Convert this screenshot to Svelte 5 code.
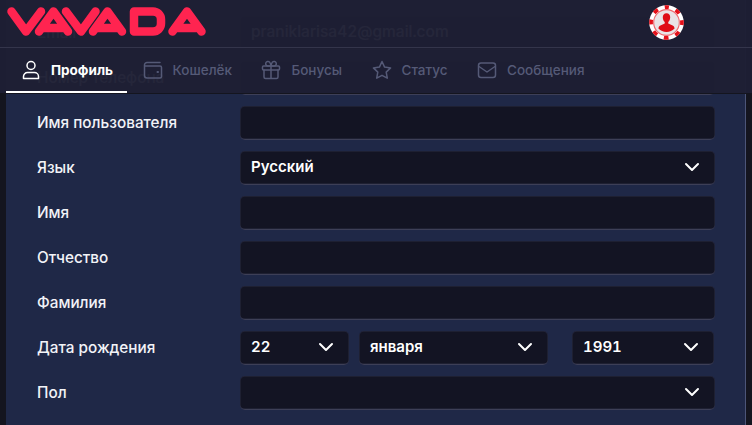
<script>
  const rows = [
    { label: "Имя пользователя" },
    { label: "Язык", value: "Русский", select: true },
    { label: "Имя" },
    { label: "Отчество" },
    { label: "Фамилия" },
    { label: "Дата рождения", date: ["22", "января", "1991"] },
    { label: "Пол", select: true },
  ];

  const tabs = [
    { id: "profile", label: "Профиль" },
    { id: "wallet", label: "Кошелёк" },
    { id: "gift", label: "Бонусы" },
    { id: "star", label: "Статус" },
    { id: "mail", label: "Сообщения" },
  ];
  let active = $state("profile");
</script>

{#snippet chevron()}
  <svg class="chevron" viewBox="0 0 16 10" width="16" height="10" aria-hidden="true">
    <path d="M2 2l6 6 6-6" fill="none" stroke="currentColor" stroke-width="2" stroke-linecap="round" stroke-linejoin="round" />
  </svg>
{/snippet}

{#snippet icon(id)}
  <svg class="tab-icon" viewBox="0 0 20 20" width="20" height="20" fill="none" stroke="currentColor" stroke-width="1.5" stroke-linecap="round" stroke-linejoin="round" aria-hidden="true">
    {#if id === "profile"}
      <circle cx="10" cy="5.5" r="4" />
      <path d="M2.5 18.500v-2a4 4 0 0 1 4-4h7a4 4 0 0 1 4 4v2z" />
    {:else if id === "wallet"}
      <path d="M17 2.500H4a2.500 2.500 0 0 0-2.500 2.500v10.500A2.500 2.500 0 0 0 4 18h13a1.500 1.500 0 0 0 1.500-1.500v-9A1.500 1.500 0 0 0 17 6H1.500" />
      <path d="M14.500 12h.5" stroke-width="2" />
    {:else if id === "gift"}
      <rect x="1.500" y="6" width="17" height="4" rx="1" />
      <path d="M3 10v7a1.500 1.500 0 0 0 1.500 1.500h11A1.500 1.500 0 0 0 17 17v-7M10 6v12.500" />
      <path d="M10 6H7a2.300 2.300 0 1 1 1.500-4C9.500 3 10 6 10 6zM10 6h3a2.300 2.300 0 1 0-1.500-4C10.500 3 10 6 10 6z" />
    {:else if id === "star"}
      <path d="M10 1.500l2.600 5.600 6 .8-4.400 4.200 1.100 6.100L10 15.300l-5.300 2.900 1.100-6.100L1.400 7.900l6-.8z" />
    {:else}
      <rect x="1.500" y="3" width="17" height="14.500" rx="2.500" />
      <path d="M2 6.500l8 5.500 8-5.500" />
    {/if}
  </svg>
{/snippet}

<div class="page">
  <header class="header">
    <div class="top">
      <svg class="logo" viewBox="0 0 210 44" width="210" height="44" aria-label="VAVADA">
        <g fill="none" stroke="#ff2450" stroke-width="8.500" stroke-linecap="round" stroke-linejoin="round">
          <path d="M11.500 11.500L26 31.500 41 11.500" />
          <path d="M39 31.500L53.500 11.500 68 31.500M44 28h19" />
          <path d="M66 11.500L81 31.500 95.500 11.500" />
          <path d="M93 31.500L107.500 11.500 122 31.500M98 28h19" />
          <path d="M134 11.500h19a8 8 0 0 1 8 8v4a8 8 0 0 1-8 8h-19z" />
          <path d="M172.500 31.500L187 11.500 201.500 31.500M177.500 28h19" />
        </g>
      </svg>
      <div class="chip" aria-hidden="true">
        <svg viewBox="0 0 36 36" width="35" height="35">
          <circle cx="18" cy="18" r="17.800" fill="#fff" />
          <circle cx="18" cy="18" r="15.900" fill="none" stroke="#e4111a" stroke-width="3.800" stroke-dasharray="5 7.490" stroke-dashoffset="2.500" transform="rotate(-90 18 18)" />
          <circle cx="18" cy="18" r="13.200" fill="#e9e4e6" stroke="#ee6d72" stroke-width="1.200" />
          <path d="M18 8.500c2.500 0 3.900 1.900 3.800 4.300-.1 2.100-.9 3.800-2 4.800v1.400l4.500 2c1.300.6 2 1.800 2 3.200a11.500 11.500 0 0 1-16.600 0c0-1.400.7-2.600 2-3.200l4.500-2v-1.400c-1.100-1-1.900-2.700-2-4.800-.1-2.400 1.300-4.300 3.800-4.300z" fill="#df0d16" />
        </svg>
      </div>
    </div>
    <nav class="tabs">
      {#each tabs as tab}
        <button class="tab" class:active={active === tab.id} onclick={() => (active = tab.id)}>
          {@render icon(tab.id)}
          <span>{tab.label}</span>
        </button>
      {/each}
    </nav>
  </header>

  <main class="panel">
    <div class="row">
      <span class="label">Email</span>
      <div class="field"><span class="email">praniklarisa42@gmail.com</span></div>
    </div>
    <div class="row">
      <span class="label">Номер телефона</span>
      <div class="field"></div>
    </div>
    {#each rows as row}
      <div class="row">
        <span class="label">{row.label}</span>
        {#if row.date}
          <div class="date">
            {#each row.date as part}
              <div class="field select"><span>{part}</span>{@render chevron()}</div>
            {/each}
          </div>
        {:else if row.select}
          <div class="field select"><span>{row.value ?? ""}</span>{@render chevron()}</div>
        {:else}
          <div class="field"></div>
        {/if}
      </div>
    {/each}
  </main>
</div>

<style>
  :global(body) {
    margin: 0;
    background: #14151f;
  }

  .page {
    position: relative;
    width: 752px;
    height: 425px;
    overflow: hidden;
    background: #14151f;
    font-family: Inter, "Noto Sans", sans-serif;
  }

  .header {
    position: absolute;
    top: 0;
    left: 0;
    width: 100%;
    z-index: 2;
    background: rgba(30, 31, 52, 0.97);
    box-shadow: 0 1px 0 #14151f;
  }

  .top {
    height: 47px;
    border-bottom: 1px solid #34354b;
    display: flex;
    align-items: flex-start;
    justify-content: space-between;
    padding-right: 68px;
  }

  .logo {
    display: block;
  }

  .chip {
    margin-top: 5px;
    height: 35px;
  }

  .tabs {
    display: flex;
    height: 45px;
    padding-left: 6px;
  }

  .tab {
    display: flex;
    align-items: center;
    gap: 10px;
    padding: 0 14px 0 15.500px;
    border: 0;
    border-bottom: 2px solid transparent;
    background: none;
    color: #555a77;
    font: 500 13.500px Inter, "Noto Sans", sans-serif;
    cursor: pointer;
  }

  .tab:first-child {
    padding: 0 14px 0 15px;
  }

  .tab.active {
    color: #fff;
    font-weight: 700;
    border-bottom-color: #fff;
  }

  .panel {
    margin: 0 6px;
    padding: 16px 30px 0 31px;
    height: 440px;
    box-sizing: border-box;
    display: flex;
    flex-direction: column;
    gap: 11px;
    background: #1f2847;
    border-right: 1px solid #4c5578;
  }

  .row {
    display: grid;
    grid-template-columns: 203px 1fr;
    align-items: center;
    height: 34px;
    color: #f2f3f7;
  }

  .label {
    padding-bottom: 2px;
    font-size: 15.300px;
    font-weight: 500;
  }

  .field {
    height: 34px;
    box-sizing: border-box;
    border-radius: 5px;
    background: #131423;
    border-bottom: 1px solid #3d3f57;
    box-shadow: inset 0 0 0 0.5px #2a2c42;
    display: flex;
    align-items: center;
    justify-content: space-between;
    padding: 0 15px 2px 11px;
    color: #fff;
    font-weight: 600;
    font-size: 15px;
    font-variant-numeric: tabular-nums;
  }

  .email {
    font-weight: 500;
    font-size: 15.500px;
  }

  .date {
    display: grid;
    grid-template-columns: 109px 189px 142px;
    column-gap: 10px;
  }

  .date .field:last-child {
    margin-left: 14px;
    width: 142px;
  }

  .chevron {
    color: #fff;
    flex: none;
  }
</style>
